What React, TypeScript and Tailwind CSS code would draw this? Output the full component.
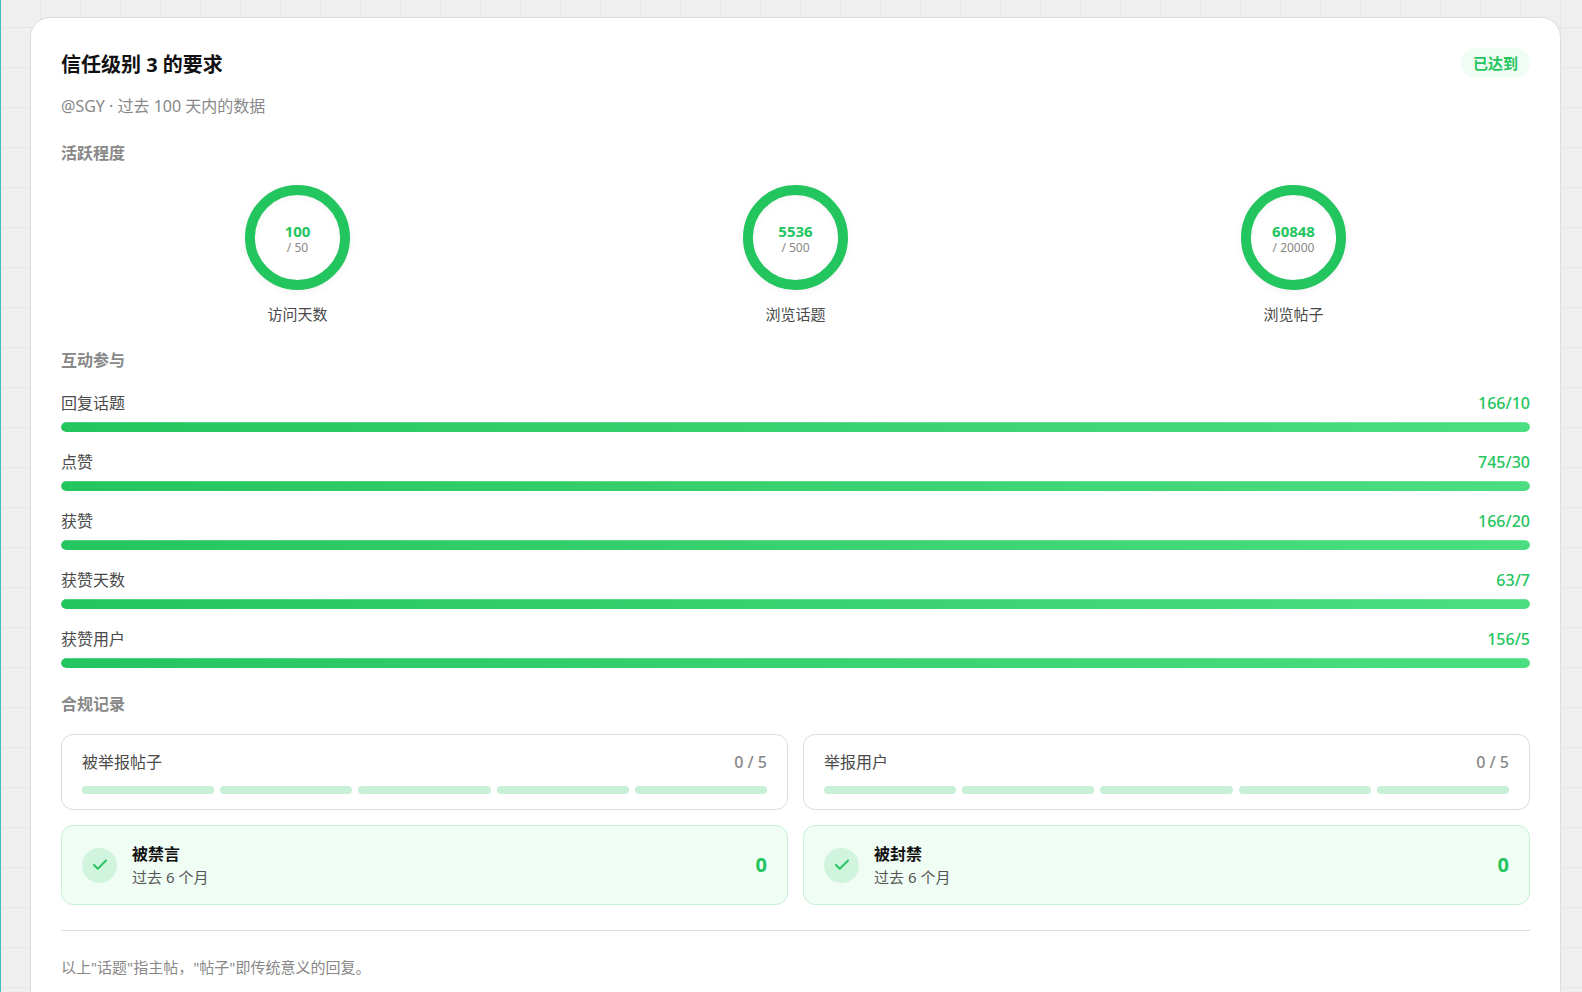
import { ReactNode } from "react";
import { Check } from "lucide-react";

const activity = [
  { label: "访问天数", value: 100, required: 50 },
  { label: "浏览话题", value: 5536, required: 500 },
  { label: "浏览帖子", value: 60848, required: 20000 },
];

const interactions = [
  { label: "回复话题", value: 166, required: 10 },
  { label: "点赞", value: 745, required: 30 },
  { label: "获赞", value: 166, required: 20 },
  { label: "获赞天数", value: 63, required: 7 },
  { label: "获赞用户", value: 156, required: 5 },
];

const quotas = [
  { label: "被举报帖子", used: 0, max: 5 },
  { label: "举报用户", used: 0, max: 5 },
];

const penalties = [
  { label: "被禁言", count: 0 },
  { label: "被封禁", count: 0 },
];

function SectionTitle({ children }: { children: ReactNode }) {
  return <h2 className="text-base leading-6 font-bold text-[#888888]">{children}</h2>;
}

function Ring({ label, value, required }: { label: string; value: number; required: number }) {
  const radius = 48;
  const length = 2 * Math.PI * radius;
  const progress = Math.min(value / required, 1);

  return (
    <div className="flex flex-col items-center gap-3">
      <div className="grid size-[105px] place-items-center rounded-full shadow-[0_2px_8px_rgba(0,0,0,0.05)]">
        <svg viewBox="0 0 106 106" className="col-start-1 row-start-1 size-full -rotate-90">
          <circle cx="53" cy="53" r={radius} fill="none" stroke="#e5e5e5" strokeWidth="10" />
          <circle
            cx="53"
            cy="53"
            r={radius}
            fill="none"
            stroke="#22c55e"
            strokeWidth="10"
            strokeDasharray={length}
            strokeDashoffset={length * (1 - progress)}
          />
        </svg>
        <div className="col-start-1 row-start-1 flex size-[85px] flex-col items-center justify-center rounded-full pt-[2px] shadow-[inset_0_2px_6px_rgba(0,0,0,0.04)]">
          <span className="text-[15px] leading-[18px] font-bold text-[#22c55e]">{value}</span>
          <span className="text-xs leading-4 text-[#888888]">/ {required}</span>
        </div>
      </div>
      <span className="text-[15px] leading-6 text-[#4a4a4a]">{label}</span>
    </div>
  );
}

function Bar({ label, value, required }: { label: string; value: number; required: number }) {
  const percent = Math.min(value / required, 1) * 100;

  return (
    <div className="flex flex-col gap-[7px]">
      <div className="flex items-center justify-between text-base leading-6">
        <span className="text-[#4a4a4a]">{label}</span>
        <span className="font-medium text-[#22c55e]">
          {value}/{required}
        </span>
      </div>
      <div className="h-[10px] overflow-hidden rounded-full bg-[#e5e5e5]">
        <div
          className="h-full rounded-full bg-linear-to-r from-[#22c55e] to-[#4ade80] shadow-[inset_0_1px_0_rgba(255,255,255,0.2)]"
          style={{ width: `${percent}%` }}
        />
      </div>
    </div>
  );
}

export default function App() {
  return (
    <main className="h-screen overflow-hidden border-l border-[#45bcbc] bg-[#efefef] bg-[linear-gradient(#e6e6e6_1px,transparent_1px),linear-gradient(90deg,#e6e6e6_1px,transparent_1px)] bg-size-[40px_40px] bg-position-[39px_27px] pt-[17px] pr-[21px] pl-[29px] font-['Noto_Sans','Noto_Sans_CJK_SC',sans-serif]">
      <article className="rounded-[20px] border border-[#dddddd] bg-white p-[30px]">
        <header className="flex items-start justify-between">
          <h1 className="text-xl leading-[34px] font-bold text-[#111111]">信任级别 3 的要求</h1>
          <span className="rounded-full bg-[#f0fdf4] px-3 py-[3px] text-[15px] leading-6 font-bold text-[#22c55e]">
            已达到
          </span>
        </header>
        <p className="mt-3 text-base leading-6 text-[#888888]">@SGY · 过去 100 天内的数据</p>

        <section className="mt-[23px]">
          <SectionTitle>活跃程度</SectionTitle>
          <div className="mt-5 grid grid-cols-3 gap-[25px]">
            {activity.map((item) => (
              <Ring key={item.label} {...item} />
            ))}
          </div>
        </section>

        <section className="mt-[22px]">
          <SectionTitle>互动参与</SectionTitle>
          <div className="mt-[19px] flex flex-col gap-[18px]">
            {interactions.map((item) => (
              <Bar key={item.label} {...item} />
            ))}
          </div>
        </section>

        <section className="mt-6">
          <SectionTitle>合规记录</SectionTitle>
          <div className="mt-[18px] grid grid-cols-2 gap-[15px]">
            {quotas.map((item) => (
              <div key={item.label} className="rounded-xl border border-[#dddddd] px-5 py-[15px]">
                <div className="flex items-center justify-between text-base leading-6">
                  <span className="text-[#4a4a4a]">{item.label}</span>
                  <span className="font-medium text-[#888888]">
                    {item.used} / {item.max}
                  </span>
                </div>
                <div className="mt-3 flex gap-[6px]">
                  {Array.from({ length: item.max }, (_, i) => (
                    <div
                      key={i}
                      className={`h-2 flex-1 rounded-full ${i < item.used ? "bg-[#ef4444]" : "bg-[#c8f0d6]"}`}
                    />
                  ))}
                </div>
              </div>
            ))}
            {penalties.map((item) => (
              <div
                key={item.label}
                className="flex items-center gap-[15px] rounded-xl border border-[#c8f0d6] bg-[#f0fdf4] px-5 py-4"
              >
                <div className="grid size-[35px] place-items-center rounded-full bg-[#d1f4de] text-[#22c55e]">
                  <Check size={18} strokeWidth={2.5} />
                </div>
                <div className="flex-1">
                  <div className="text-base leading-6 font-bold text-[#111111]">{item.label}</div>
                  <div className="text-[15px] leading-[22px] text-[#555555]">过去 6 个月</div>
                </div>
                <span className="text-xl font-bold text-[#22c55e]">{item.count}</span>
              </div>
            ))}
          </div>
        </section>

        <footer className="mt-[25px] border-t border-[#dddddd] pt-6 pb-10 text-[15px] leading-6 text-[#888888]">
          <p>以上"话题"指主帖，"帖子"即传统意义的回复。</p>
        </footer>
      </article>
    </main>
  );
}
